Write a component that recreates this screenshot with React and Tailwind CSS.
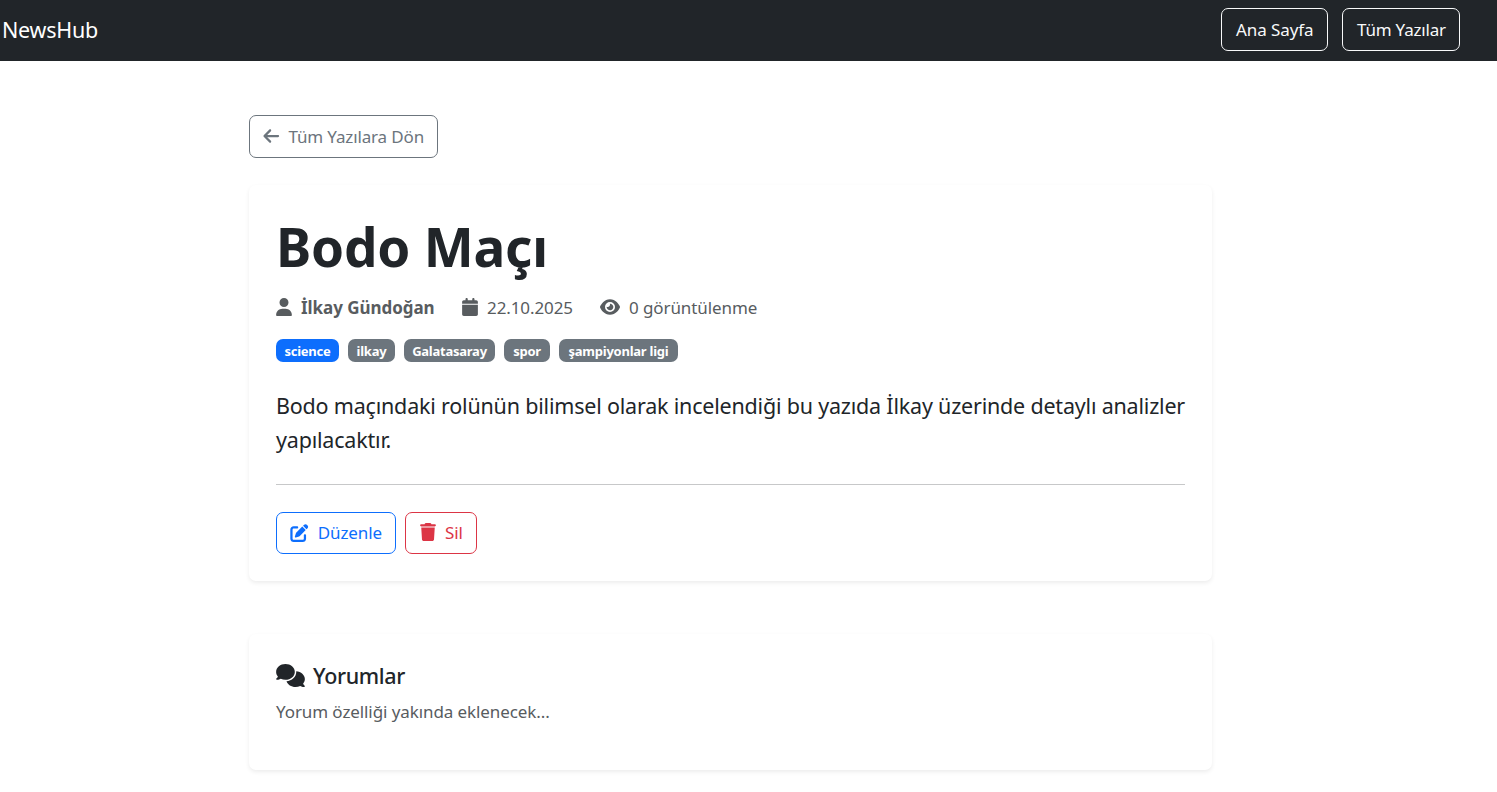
import { FaArrowLeft, FaUser, FaCalendar, FaEye, FaTrash, FaComments, FaPenToSquare } from 'react-icons/fa6';

const tags = [
  { name: 'science', box: 'w-[63px] bg-[#0d6efd]' },
  { name: 'ilkay', box: 'w-[47px] bg-[#6c757d]' },
  { name: 'Galatasaray', box: 'w-[91px] bg-[#6c757d]' },
  { name: 'spor', box: 'w-[46px] bg-[#6c757d]' },
  { name: 'şampiyonlar ligi', box: 'w-[119px] bg-[#6c757d]' },
];

function Button({ className, children }) {
  return (
    <button type="button" className={`flex shrink-0 items-center rounded-[7px] border px-[13px] ${className}`}>
      {children}
    </button>
  );
}

function Card({ className, children }) {
  return (
    <section className={`rounded-[7px] bg-white px-[27px] shadow-[0_2px_4px_rgba(0,0,0,0.075)] ${className}`}>
      {children}
    </section>
  );
}

export default function App() {
  return (
    <div className="min-h-[792px] overflow-hidden whitespace-nowrap bg-white font-['Noto_Sans',sans-serif] text-[17px] leading-[27px] tracking-[-0.09px] text-[#212529]">
      <header className="flex h-[61px] items-center justify-between bg-[#212529] pl-[2px] pr-[37px] text-white">
        <span className="mb-[3px] text-[21.5px] tracking-[-0.25px]">NewsHub</span>
        <nav className="mb-[2px] flex gap-[14px]">
          <Button className="h-[43px] w-[107px] border-[#f8f9fa] pl-[14px] text-[#f8f9fa]">Ana Sayfa</Button>
          <Button className="h-[43px] w-[118px] border-[#f8f9fa] pl-[14px] tracking-[-0.2px] text-[#f8f9fa]">Tüm Yazılar</Button>
        </nav>
      </header>
      <main className="ml-[249px] w-[963px] pt-[54px]">
        <Button className="h-[43px] w-[189px] border-[#6c757d] text-[#6c757d]">
          <FaArrowLeft className="mb-px mr-[9px] size-[18px]" />
          <span className="tracking-[-0.15px]">Tüm Yazılara Dön</span>
        </Button>
        <Card className="mt-[27px] h-[396px] pt-[27px]">
          <h1 className="h-[65px] text-[53px] font-bold leading-[69px] tracking-[-0.2px]">Bodo Maçı</h1>
          <div className="mt-[17px] flex h-[27px] items-center text-[#585c5f]">
            <div className="flex w-[186px] items-center">
              <FaUser className="mb-px mr-[9px] h-[18px] w-[16px]" />
              <span className="font-bold tracking-[-0.05px]">İlkay Gündoğan</span>
            </div>
            <div className="flex w-[138px] items-center">
              <FaCalendar className="mb-px mr-[9px] h-[18px] w-[16px]" />
              <span>22.10.2025</span>
            </div>
            <div className="flex items-center">
              <FaEye className="mb-px mr-[9px] h-[18px] w-[20px]" />
              <span>0 görüntülenme</span>
            </div>
          </div>
          <div className="mt-[18px] flex gap-[9px]">
            {tags.map((tag) => (
              <span
                key={tag.name}
                className={`flex h-[23px] items-center justify-center rounded-[7px] pt-px text-[13px] font-bold tracking-[-0.24px] text-white ${tag.box}`}
              >
                {tag.name}
              </span>
            ))}
          </div>
          <p className="mt-[27px] text-[21.5px] leading-[34px] tracking-[-0.2px]">
            Bodo maçındaki rolünün bilimsel olarak incelendiği bu yazıda İlkay üzerinde detaylı analizler
            <br />
            yapılacaktır.
          </p>
          <hr className="mt-[27px] border-t border-[#c7c8c9]" />
          <div className="mt-[27px] flex gap-[9px]">
            <Button className="h-[42px] w-[120px] border-[#0d6efd] text-[#0d6efd]">
              <FaPenToSquare className="mb-px mr-[9px] h-[18px] w-[19px]" />
              <span className="mb-px">Düzenle</span>
            </Button>
            <Button className="h-[42px] w-[72px] border-[#dc3545] pl-[14px] text-[#dc3545]">
              <FaTrash className="mb-[2px] mr-[9px] h-[18px] w-[16px]" />
              <span className="mb-px">Sil</span>
            </Button>
          </div>
        </Card>
        <Card className="mt-[53px] h-[136px] pt-[28px]">
          <h2 className="flex h-[27px] items-center text-[21.5px] font-medium tracking-[-0.35px]">
            <FaComments className="mr-[8px] h-[23px] w-[29px]" />
            Yorumlar
          </h2>
          <p className="mt-[9px] text-[#585c5f]">Yorum özelliği yakında eklenecek...</p>
        </Card>
      </main>
    </div>
  );
}
